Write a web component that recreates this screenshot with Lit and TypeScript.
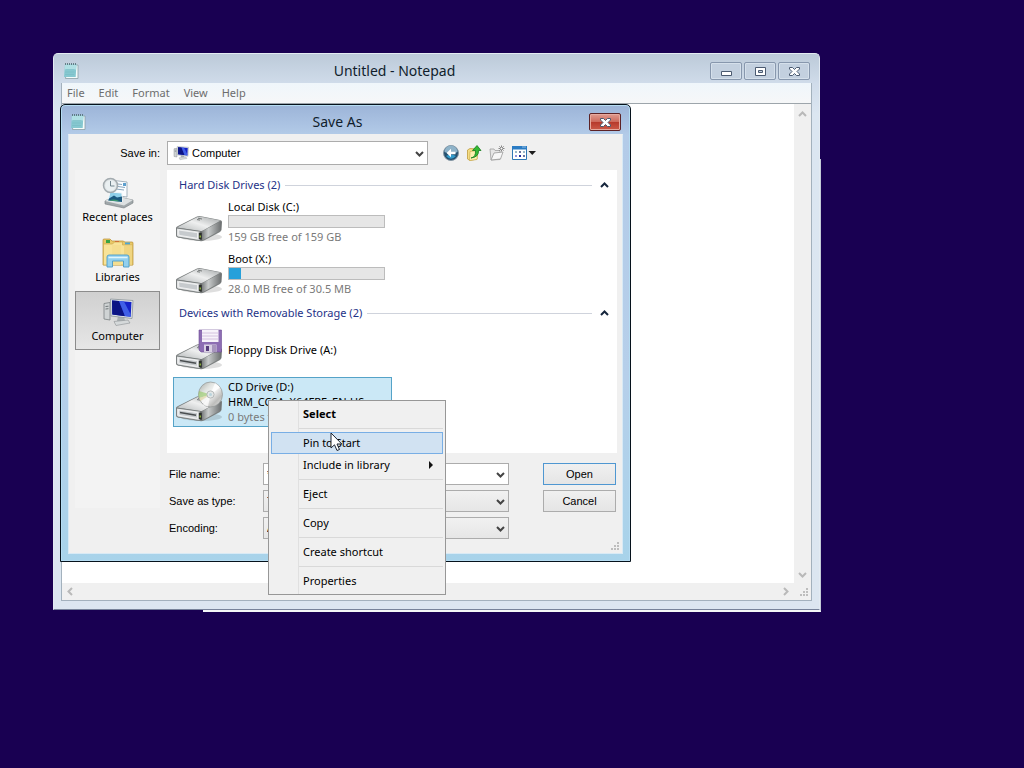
import { LitElement, html, css, svg, nothing, TemplateResult } from "lit";
import { customElement, state } from "lit/decorators.js";
import { classMap } from "lit/directives/class-map.js";

const chevron = (dir: "up" | "down" | "left" | "right") => {
  const d = {
    up: "M2 7 L5.5 3.5 L9 7",
    down: "M2 4 L5.5 7.5 L9 4",
    left: "M7 2 L3.5 5.5 L7 9",
    right: "M4 2 L7.5 5.5 L4 9",
  }[dir];
  return html`<svg class="chev" width="11" height="11" viewBox="0 0 11 11" aria-hidden="true">
    <path d=${d} fill="none" stroke="currentColor" stroke-width="2" />
  </svg>`;
};

const notepadIcon = html`<svg width="16" height="18" viewBox="0 0 16 18" aria-hidden="true">
  <path d="M4 3h11v13.500h-12.500z" fill="#f4fbfb" stroke="#8aa0a4" stroke-width=".8" />
  <path d="M2 2.500h11.500l-.8 12.500h-11.700z" fill="#86c8d0" />
  <path d="M2 2.500h11.500l-.3 5h-11.600z" fill="#b0e0e4" />
  <path d="M2.500 7.500h9M2.200 10h9M2 12.500h9" stroke="#74b9c3" stroke-width=".5" />
  <path d="M2 2h12" stroke="#49636b" stroke-width="1.500" stroke-dasharray="1 1" />
</svg>`;

const gripIcon = html`<svg class="grip" width="10" height="10" viewBox="0 0 10 10" aria-hidden="true">
  <path d="M7 1h2M7 4h2M4 4h2M7 7h2M4 7h2M1 7h2" stroke="#bdbdbd" stroke-width="2" />
</svg>`;

const driveBody = svg`
  <ellipse cx="26" cy="39" rx="21" ry="4" fill="#000" opacity=".13" />
  <path d="M1 30 Q1 29 3 28 L22 18.500 Q24 17.800 26 18.200 L45 22 Q47 22.500 47 24 L46.500 32 Q46 33 45 34 L29 42.500 Q27 43.500 25 43 L3 39.500 Q1 39 1 37.500z" fill="#7c8080" />
  <path d="M2 29.500 L22.500 19 Q24 18.400 26 18.800 L45.500 22.500 L28 32.500 Q26 33.300 24 33z" fill="url(#drive-top)" />
  <path d="M24.500 33 Q27 33.300 28.500 32.500 L46.300 23 L46 32 L28.500 41.800 Q27 42.600 25 42.300z" fill="url(#drive-side)" />
  <path d="M1.500 30 L24.500 33.200 Q25.500 33.500 25.500 34.500 V42.700 L3 39 Q1.500 38.600 1.500 37z" fill="#e2e4e5" stroke="#6f7374" stroke-width=".8" />
  <path d="M3.500 32 L22.500 34.700 V40.300 L4 37.300z" fill="#c6cacd" stroke="#f9f9f9" stroke-width=".7" />
  <path d="M23.800 34.500 l3 .3 v7 l-3 -.5z" fill="#2b302b" />
  <path d="M25.200 37.500v2" stroke="#a3cf3c" stroke-width="1.200" />
  <path d="M23 20.200 l4 .8 M22 21.600 l3 .5" stroke="#777b7b" stroke-width="1" />`;

const driveIcon = (kind: "disk" | "floppy" | "cd") => html`<svg class="drive" width="48" height="48" viewBox="0 0 48 48" aria-hidden="true">
  <defs>
    <linearGradient id="drive-top" x1="0" y1="1" x2="1" y2="0">
      <stop offset="0" stop-color="#b4b8b9" /><stop offset=".5" stop-color="#eeefef" /><stop offset="1" stop-color="#a2a6a7" />
    </linearGradient>
    <linearGradient id="drive-side" x1="0" y1="0" x2="1" y2="0">
      <stop offset="0" stop-color="#5c5f60" /><stop offset=".4" stop-color="#c9cccc" /><stop offset="1" stop-color="#6c6f70" />
    </linearGradient>
    <linearGradient id="disc" x1="0" y1="0" x2="1" y2="1">
      <stop offset="0" stop-color="#a3a7a4" /><stop offset=".3" stop-color="#dfe2df" /><stop offset=".5" stop-color="#f8f8f8" /><stop offset=".75" stop-color="#bdbdbb" /><stop offset="1" stop-color="#e9e9e9" />
    </linearGradient>
  </defs>
  ${driveBody}
  ${kind !== "disk" ? svg`<path d="M5 34.500 L21 37.200" stroke="#4a4e50" stroke-width="1.600" />` : nothing}
  ${kind === "floppy"
    ? svg`<path d="M24 4h22.500v22h-20.500l-2-2z" fill="#8d6db3" stroke="#6b4a94" stroke-width=".6" />
      <path d="M27 4h16.500v12h-16.500z" fill="#f7f2fa" />
      <path d="M27 7h16.500M27 10h16.500M27 13h16.500" stroke="#cbb5d8" stroke-width=".8" />
      <path d="M29 18.500h12.500v7.500h-12.500z" fill="#d9d0e3" />
      <path d="M31 20h3v5h-3z" fill="#573c7b" /><path d="M37 19h4v7h-4z" fill="#a795bd" />`
    : nothing}
  ${kind === "cd"
    ? svg`<ellipse cx="35.500" cy="16.500" rx="12" ry="12.500" fill="url(#disc)" stroke="#8f9493" stroke-width=".7" />
      <path d="M35.500 16.500 L24 13 A12 12.500 0 0 0 24 20z" fill="#93c860" opacity=".6" />
      <path d="M35.500 16.500 L24 20 A12 12.500 0 0 0 25.500 23z" fill="#dccb86" opacity=".5" />
      <path d="M35.500 16.500 L40 5 A12 12.500 0 0 1 45 9.500z" fill="#fff" opacity=".8" />
      <path d="M35.500 16.500 L28 26.500 A12 12.500 0 0 0 33 28.500z" fill="#fff" opacity=".7" />
      <circle cx="35.500" cy="16.500" r="3.600" fill="#e3e7e7" stroke="#a9adad" stroke-width=".8" /><circle cx="35.500" cy="16.500" r="1.500" fill="#b9d3dc" />`
    : nothing}
</svg>`;

const recentIcon = html`<svg width="32" height="32" viewBox="0 0 32 32" aria-hidden="true">
  <path d="M3 24 L12 19 L31 23 V26 L22 31 L3 27z" fill="#a0a7aa" stroke="#757c7f" stroke-width=".6" />
  <path d="M3 24 L12 19 L31 23 L22 28.500z" fill="#dde1e2" />
  <path d="M12 3.500 L25 5 V20 L11 18z" fill="#fbfdff" stroke="#8395a4" stroke-width=".7" />
  <path d="M16 7 l4 .5 M16 9.500 l7 1 M14 12 l8 1" stroke="#8aa7bd" stroke-width="1" />
  <path d="M21 6h3v3h-3z" fill="#5c9fce" />
  <path d="M8 15 L20 16 L20 25 L6 23.500z" fill="#8fd0ea" stroke="#f4f8fa" stroke-width="1" />
  <path d="M7 21.500 L12 18.500 L15 20.500 L20 19.500 V25 L6 23.500z" fill="#1c5a80" />
  <path d="M7 23.500 q6 -2.500 11 1z" fill="#3f9a70" />
  <circle cx="8.500" cy="8.500" r="7" fill="#dfe4e6" stroke="#a3abaf" stroke-width="1.500" />
  <circle cx="8.500" cy="8.500" r="5.200" fill="#eaf0f2" /><path d="M8.500 4V9H12.500" fill="none" stroke="#71848e" stroke-width="1" />
</svg>`;

const librariesIcon = html`<svg width="32" height="32" viewBox="0 0 32 32" aria-hidden="true">
  <path d="M1 3 q0-1 1-1 h6 l2 2 h11 l2 1 h7 q1 0 1 1 v22 h-30z" fill="#e9c968" stroke="#b88d30" stroke-width=".7" />
  <path d="M4 3h4v3h-4z" fill="#3aa343" /><path d="M13 4h4v3h-4z" fill="#d4552c" /><path d="M23 5.500h5v2h-5z" fill="#4aa6d8" />
  <path d="M1.500 7h9l2-2h8v3h10v20h-29z" fill="#f8e398" stroke="#cfaa4d" stroke-width=".7" />
  <path d="M10 8h9v20h-9z" fill="#f5de90" /><path d="M22 9h8v18h-8z" fill="#f0d580" />
  <path d="M5 20 q0-2 2-2 h18 q2 0 2 2 v10 h-5.500 v-6 h-11 v6 h-5.500z" fill="#93d0ee" stroke="#4b9cc9" stroke-width=".9" />
  <path d="M6.500 20.500h19" stroke="#dff4fd" stroke-width="1.500" />
</svg>`;

const computerIcon = (size: number) => html`<svg width=${size} height=${size} viewBox="0 0 32 32" aria-hidden="true">
  <path d="M2 7.500 L8 6.500 V24 L2 23z" fill="#cfd3d4" stroke="#7b8183" stroke-width=".8" />
  <path d="M3.500 10.500l3-.3M3.500 13l3-.3" stroke="#6f7678" stroke-width="1" />
  <path d="M16 20 h6 l1 5 h-8z" fill="#aab0b2" />
  <path d="M12 25.500 L26 24 L28 27 L14 29.500z" fill="#d5d9da" stroke="#8b9194" stroke-width=".6" />
  <path d="M8.500 3 L31 4.500 L30 22.500 L9 20z" fill="#dfe4e8" stroke="#8c9499" stroke-width=".8" />
  <path d="M10 4.500 L29.500 6 L28.700 20.800 L10.300 18.500z" fill="#1523c8" />
  <path d="M10 4.500 L17 5 L23 20.200 L10.300 18.500z" fill="#0c1484" />
  <path d="M17 5 L22 5.400 L28.700 18.500 V20.800 L23 20.200z" fill="#405fe6" />
</svg>`;

const backIcon = html`<svg width="18" height="18" viewBox="0 0 18 18" aria-hidden="true">
  <circle cx="9" cy="9" r="7.500" fill="#25506f" stroke="#8697a4" />
  <path d="M2.500 8 A6.500 6.500 0 0 1 15.500 8 Q9 11 2.500 8z" fill="#8fb3c9" />
  <path d="M4 12 Q9 17.500 14 12 Q9 9 4 12z" fill="#329bcb" />
  <path d="M9 4.800 L4.600 9 L9 13.200 V10.300 H13.500 V7.700 H9z" fill="#fff" />
</svg>`;

const upIcon = html`<svg width="18" height="18" viewBox="0 0 18 18" aria-hidden="true">
  <path d="M2.500 6 L5 4.500 L12 5 V15 L5 16.500 L2.500 15z" fill="#f5dd83" stroke="#bf9d3f" stroke-width=".8" />
  <path d="M5 7.500 L13 6.500 L12 15.500 L4.500 16.500z" fill="#fcefb0" stroke="#ccac52" stroke-width=".7" />
  <path d="M6 14 Q11 13 10.500 6.500 H7.500 L12 1.500 L16 6.500 H13.500 Q14 13 6 14z" fill="#35b934" stroke="#157c1c" stroke-width=".8" />
</svg>`;

const newFolderIcon = html`<svg width="18" height="18" viewBox="0 0 18 18" aria-hidden="true">
  <path d="M2 5 h4 l1 1.500 h5 v9 L3 16z" fill="#e6e6e6" stroke="#a0a0a0" stroke-width=".8" />
  <path d="M3 16 L6 9 L15 8 L12.500 15z" fill="#f7f7f7" stroke="#999" stroke-width=".8" />
  <path d="M13.500 1.500v6M10.500 4.500h6M11.400 2.400l4.200 4.200M15.600 2.400l-4.200 4.200" stroke="#858585" stroke-width="1" /><circle cx="13.500" cy="4.500" r="1" fill="#fff" />
</svg>`;

const viewsIcon = html`<svg width="26" height="18" viewBox="0 0 26 18" aria-hidden="true">
  <path d="M1.500 2.500h14v13h-14z" fill="#fff" stroke="#3077b5" />
  <path d="M1 2h15v3.500h-15z" fill="#2b7cc4" /><path d="M11.500 3h1M13.500 3h1" stroke="#fff" />
  <path d="M4 7h2v2h-2zM12 7h2v2h-2z" fill="#9bb9c8" /><path d="M8 7h2v2h-2zM12 11h2v2h-2z" fill="#6b75a0" />
  <path d="M4 11h2v2h-2z" fill="#8f90dd" /><path d="M8 11h2v2h-2z" fill="#2430a0" />
  <path d="M17.500 7h7.500l-3.750 4z" fill="#1d1d1d" />
</svg>`;

const captionGlyph = (kind: "min" | "max" | "close") => {
  const shapes = {
    min: svg`<path d="M2.500 7.500h10v4h-10z" fill="#fff" stroke="#4b5a70" />`,
    max: svg`<path d="M2.500 3.500h10v8h-10z" fill="#fff" stroke="#4b5a70" /><path d="M5.500 6.500h4v2h-4z" fill="#c3d0de" stroke="#4b5a70" />`,
    close: svg`<path d="M2.500 3.500h3l2 2 2-2h3v1.500l-2.500 2.500 2.500 2.500v1.500h-3l-2-2-2 2h-3v-1.500l2.500-2.500-2.500-2.500z" fill="#fff" stroke="#4b5a70" />`,
  };
  return html`<svg width="15" height="15" viewBox="0 0 15 15" aria-hidden="true">${shapes[kind]}</svg>`;
};

interface Drive {
  name: string;
  kind: "disk" | "floppy" | "cd";
  used?: number;
  volume?: string;
  space?: string;
}

const GROUPS: { title: string; drives: Drive[] }[] = [
  {
    title: "Hard Disk Drives (2)",
    drives: [
      { name: "Local Disk (C:)", kind: "disk", used: 0, space: "159 GB free of 159 GB" },
      { name: "Boot (X:)", kind: "disk", used: 8, space: "28.0 MB free of 30.5 MB" },
    ],
  },
  {
    title: "Devices with Removable Storage (2)",
    drives: [
      { name: "Floppy Disk Drive (A:)", kind: "floppy" },
      { name: "CD Drive (D:)", kind: "cd", volume: "HRM_CCSA_X64FRE_EN-US...", space: "0 bytes free of 3.54 GB" },
    ],
  },
];

const MENU: string[][] = [["Select"], ["Pin to Start", "Include in library"], ["Eject"], ["Copy"], ["Create shortcut"], ["Properties"]];

@customElement("app-root")
export class AppRoot extends LitElement {
  @state() private selected = "CD Drive (D:)";
  @state() private hot = "Pin to Start";

  static styles = css`
    :host {
      display: block;
      position: relative;
      height: 100vh;
      overflow: hidden;
      background: #190052;
      font: 11px/16px "Noto Sans", "Open Sans", sans-serif;
      color: #000;
    }
    * { box-sizing: border-box; }
    svg { display: block; flex: none; }
    button, input, select, textarea { font: inherit; color: inherit; margin: 0; padding: 0; border-radius: 0; outline: none; }
    button { background: none; border: 0; }
    h1, h2 { margin: 0; font: inherit; }

    .backdrop {
      position: absolute;
      inset: 159px 203px 156px 203px;
      background: #d7dfe8;
      border: solid #c3cad6;
      border-width: 0 1px 2px 0;
      border-bottom-color: #f4f6f8;
    }
    .window { position: absolute; display: flex; flex-direction: column; }
    .notepad {
      inset: 53px 204px 158px 53px;
      padding: 0 7px 8px;
      border: 1px solid #e3ebf2;
      border-bottom-color: #77839a;
      border-radius: 5px 5px 0 0;
      background: linear-gradient(#bccad9, #d0dcea 30px, #dbe6f1 60px, #dce6f0);
    }
    .titlebar { display: flex; align-items: center; height: 29px; flex: none; padding: 5px 2px 0; }
    .titlebar h1 { flex: 1; text-align: center; font-size: 14px; line-height: 20px; color: #101d2c; }
    .captions { display: flex; gap: 2px; }
    .caption {
      display: grid;
      place-items: center;
      width: 32px;
      height: 18px;
      border: 1px solid #8797ad;
      border-radius: 2px;
      box-shadow: inset 0 0 0 1px #d5e0eb;
      background: #c3d0df;
    }
    .caption.danger {
      border-color: #5c2225;
      background: linear-gradient(#e09c90, #cd6a5c 48%, #b73a2c 52%, #cc5a48);
      box-shadow: inset 0 0 0 1px #e7a99e;
    }
    .client { flex: 1; min-height: 0; display: flex; flex-direction: column; border: 1px solid #a3b1bd; border-top: 0; background: #fff; }
    .menubar { display: flex; gap: 14px; height: 21px; flex: none; align-items: center; padding: 0 5px; background: linear-gradient(#eff6fb, #f6f7f8); border-bottom: 1px solid #9da5ab; color: #6d6d6d; }
    .menubar button { line-height: 18px; }
    .editor { flex: 1; min-height: 0; display: grid; grid-template: 1fr 17px / 1fr 17px; }
    .editor textarea { border: 0; resize: none; background: #fff; width: 100%; height: 100%; }
    .track { display: flex; justify-content: space-between; align-items: center; background: #f0f0f0; color: #b9b9b9; padding: 3px; }
    .track.v { flex-direction: column; padding: 5px 0 3px; }
    .corner { display: grid; place-items: end; padding: 2px; background: #f0f0f0; }

    .dialog {
      left: 60px;
      top: 104px;
      width: 571px;
      padding: 0 7px 7px;
      border: 1px solid #06121c;
      border-radius: 5px 5px 0 0;
      background: linear-gradient(#9cb4d8, #b3cbe8 30px, #b6cfea 60%, #a8d3ea);
      box-shadow: inset 0 0 0 1px #b5dcf2;
    }
    .body {
      display: grid;
      grid-template-columns: 85px minmax(0, 1fr);
      gap: 5px 7px;
      padding: 6px 5px 14px 6px;
      background: #f0f0f0;
      border: 1px solid #d9eaf5;
      border-top-color: #f0f0f0;
      position: relative;
    }
    .classic { font: 11px/16px "Liberation Sans", Arial, sans-serif; }
    .look-label { text-align: right; align-self: center; }
    .lookbar { display: flex; align-items: center; }
    .combo { position: relative; display: flex; align-items: center; height: 22px; background: #fff; border: 1px solid #acacac; min-width: 0; }
    .combo.look { flex: 0 1 261px; height: 24px; padding-left: 5px; }
    .combo.flat { background: linear-gradient(#f1f1f1, #e6e6e6); }
    .combo select, .combo input { appearance: none; flex: 1; min-width: 0; height: 100%; border: 0; background: none; padding: 0 20px 0 3px; }
    .combo .chev { position: absolute; right: 2px; pointer-events: none; color: #444; }
    .tools { display: flex; gap: 5px; margin-left: 14px; }

    .places { align-self: start; min-height: 338px; padding-top: 1px; background: #f3f3f3; }
    .place { display: flex; flex-direction: column; align-items: center; width: 100%; height: 60px; padding-top: 6px; white-space: nowrap; }
    .place.on { height: 59px; padding-top: 4px; border: 1px solid #8c8c8c; background: linear-gradient(#d0d0d0, #e6e6e6); }

    .list { background: #fff; padding: 7px 6px 19px; min-height: 283px; }
    .group { display: flex; align-items: center; gap: 5px; padding: 0 1px 0 6px; margin-bottom: 4px; color: #1e3287; }
    .group .rule { flex: 1; height: 1px; background: #cfd3dc; margin-right: 2px; }
    .group .chev { color: #16263c; }
    .drives { display: grid; gap: 2px; margin-bottom: 6px; }
    .tile { display: flex; align-items: center; gap: 5px; width: 219px; height: 50px; padding: 0 1px; border: 1px solid transparent; text-align: left; }
    .tile.on { background: #cbe8f6; border-color: #55a3c8; }
    .lines { display: grid; min-width: 0; line-height: 15px; padding-bottom: 2px; }
    .lines span { white-space: nowrap; overflow: hidden; }
    .lines .dim { color: #7a7a7a; }
    .meter { width: 157px; height: 13px; margin: 1px 0; border: 1px solid #bcbcbc; background: #e6e6e6; }
    .fill { height: 100%; background: #26a0da; }

    .form { display: grid; grid-template-columns: 94px minmax(0, 1fr) 73px; gap: 5px 0; padding: 10px 1px 0 2px; align-items: center; }
    .push { height: 22px; margin: 0; border: 1px solid #acacac; background: linear-gradient(#f0f0f0, #e5e5e5); }
    .push.main { border-color: #4f97d1; }
    .form .combo { margin-right: 34px; }
    .body > .grip { position: absolute; right: 2px; bottom: 1px; }

    .context {
      position: absolute;
      left: 268px;
      top: 400px;
      width: 178px;
      padding: 2px;
      border: 1px solid #979797;
      background: linear-gradient(90deg, #f0f0f0 29px, #e0e0e0 29px, #e0e0e0 30px, #f0f0f0 30px);
    }
    .context hr { margin: 3px 0 3px 28px; height: 1px; border: 0; background: #d9d9d9; }
    .item { display: flex; align-items: center; justify-content: space-between; width: 100%; height: 22px; padding: 0 7px 0 31px; border: 1px solid transparent; }
    .item.hot { background: #d1e2f2; border-color: #78aee5; }
    .item.default { font-weight: 700; }
    .cursor { position: absolute; left: 330px; top: 432px; pointer-events: none; }
  `;

  private combo(id: string, text: string) {
    return html`<div class="combo flat"><select id=${id}><option>${text}</option></select>${chevron("down")}</div>`;
  }

  private place(name: string, icon: TemplateResult, on = false) {
    return html`<button class=${classMap({ place: true, on })}>${icon}<span>${name}</span></button>`;
  }

  private tile(d: Drive) {
    return html`<button class=${classMap({ tile: true, on: d.name === this.selected })} @click=${() => (this.selected = d.name)}>
      ${driveIcon(d.kind)}
      <span class="lines">
        <span>${d.name}</span>
        ${d.volume ? html`<span>${d.volume}</span>` : nothing}
        ${d.used !== undefined ? html`<div class="meter"><div class="fill" style="width:${d.used}%"></div></div>` : nothing}
        ${d.space ? html`<span class="dim">${d.space}</span>` : nothing}
      </span>
    </button>`;
  }

  private notepad() {
    return html`<section class="window notepad" aria-label="Notepad">
      <header class="titlebar">
        ${notepadIcon}
        <h1>Untitled - Notepad</h1>
        <div class="captions">
          <button class="caption" aria-label="Minimize">${captionGlyph("min")}</button>
          <button class="caption" aria-label="Maximize">${captionGlyph("max")}</button>
          <button class="caption" aria-label="Close">${captionGlyph("close")}</button>
        </div>
      </header>
      <div class="client">
        <nav class="menubar">${["File", "Edit", "Format", "View", "Help"].map((m) => html`<button>${m}</button>`)}</nav>
        <div class="editor">
          <textarea aria-label="Document text"></textarea>
          <div class="track v">${chevron("up")}${chevron("down")}</div>
          <div class="track">${chevron("left")}${chevron("right")}</div>
          <div class="corner">${gripIcon}</div>
        </div>
      </div>
    </section>`;
  }

  private dialog() {
    return html`<section class="window dialog" role="dialog" aria-label="Save As">
      <header class="titlebar">
        ${notepadIcon}
        <h1>Save As</h1>
        <button class="caption danger" aria-label="Close">${captionGlyph("close")}</button>
      </header>
      <div class="body">
        <label class="look-label classic" for="look">Save in:</label>
        <div class="lookbar">
          <div class="combo look classic">${computerIcon(16)}<select id="look"><option>Computer</option></select>${chevron("down")}</div>
          <div class="tools">
            <button aria-label="Back">${backIcon}</button>
            <button aria-label="Up one level">${upIcon}</button>
            <button aria-label="New folder">${newFolderIcon}</button>
            <button aria-label="Views">${viewsIcon}</button>
          </div>
        </div>
        <nav class="places">
          ${this.place("Recent places", recentIcon)} ${this.place("Libraries", librariesIcon)} ${this.place("Computer", computerIcon(32), true)}
        </nav>
        <div class="content">
          <div class="list">
            ${GROUPS.map(
              (g) => html`<h2 class="group">${g.title}<span class="rule"></span>${chevron("up")}</h2>
                <div class="drives">${g.drives.map((d) => this.tile(d))}</div>`
            )}
          </div>
          <form class="form classic" @submit=${(e: Event) => e.preventDefault()}>
            <label for="name">File name:</label>
            <div class="combo"><input id="name" value="*.txt" />${chevron("down")}</div>
            <button class="push main">Open</button>
            <label for="type">Save as type:</label>
            ${this.combo("type", "Text Documents (*.txt)")}
            <button class="push" type="button">Cancel</button>
            <label for="enc">Encoding:</label>
            ${this.combo("enc", "ANSI")}
          </form>
        </div>
        ${gripIcon}
      </div>
    </section>`;
  }

  private contextMenu() {
    return html`<div class="context" role="menu">
      ${MENU.map(
        (part, i) => html`${i ? html`<hr />` : nothing}${part.map(
          (label) => html`<button
            role="menuitem"
            class=${classMap({ item: true, hot: label === this.hot, default: label === "Select" })}
            @mouseenter=${() => (this.hot = label)}
          >
            ${label}${label === "Include in library"
              ? html`<svg width="8" height="8" viewBox="0 0 8 8" aria-hidden="true"><path d="M2 0l4 4-4 4z" fill="#111" /></svg>`
              : nothing}
          </button>`
        )}`
      )}
    </div>`;
  }

  render() {
    return html`
      <div class="backdrop"></div>
      ${this.notepad()} ${this.dialog()} ${this.contextMenu()}
      <svg class="cursor" width="13" height="20" viewBox="0 0 13 20" aria-hidden="true">
        <path d="M1 1v15l3.500-3.200 2.500 5.700 2.500-1-2.500-5.500h4.800z" fill="#fff" stroke="#1c2430" />
      </svg>
    `;
  }
}
